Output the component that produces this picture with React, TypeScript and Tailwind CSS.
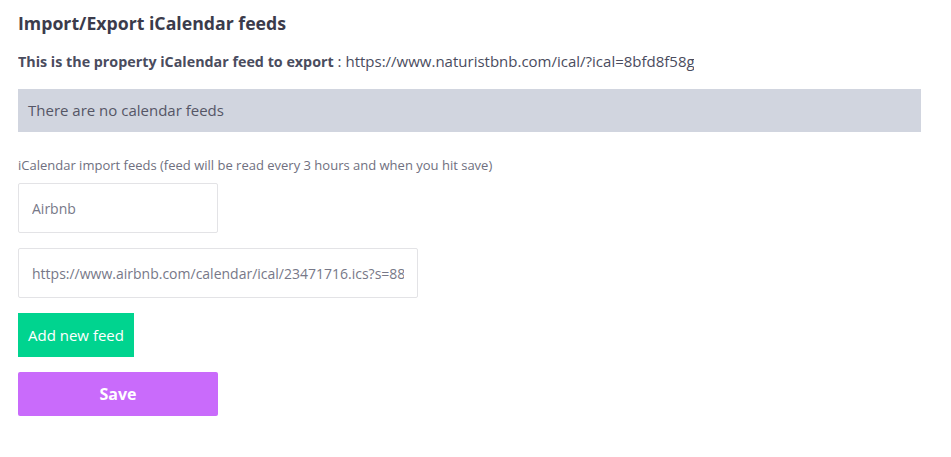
export default function App() {
  return (
    <div className="min-h-screen bg-white px-[18px] pt-[12px] font-['Open_Sans',sans-serif] text-[#44475a]">
      <h2 className="text-[17.7px] font-bold leading-[22px] text-[#3b3b4b]">Import/Export iCalendar feeds</h2>
      <p className="mt-[17px] text-[15px] leading-[20px] whitespace-nowrap overflow-hidden w-[676px]">
        <span className="font-bold text-[14.3px] text-[#4a4c5e]">This is the property iCalendar feed to export</span>
        <span className="text-[#4a4c5e]"> : https://www.naturistbnb.com/ical/?ical=8bfd8f58g</span>
      </p>
      <div className="mt-[17px] h-[43px] w-[903px] bg-[#d1d5df] px-[10px] flex items-center text-[15px] text-[#555666]">
        There are no calendar feeds
      </div>
      <label className="block mt-[25px] text-[13px] leading-[16px] text-[#6f7080]">
        iCalendar import feeds (feed will be read every 3 hours and when you hit save)
      </label>
      <input
        type="text"
        defaultValue="Airbnb"
        className="block mt-[10px] h-[50px] w-[200px] border border-[#e3e3e6] rounded-[2px] px-[13px] text-[14px] text-[#777888] outline-none"
      />
      <input
        type="text"
        defaultValue="https://www.airbnb.com/calendar/ical/23471716.ics?s=88e3f0a1b2c3"
        className="block mt-[15px] h-[50px] w-[400px] border border-[#e3e3e6] rounded-[2px] px-[13px] text-[14px] text-[#777888] outline-none"
      />
      <button className="block mt-[15px] h-[44px] px-[10px] bg-[#00d48f] text-white text-[15px] font-medium">
        Add new feed
      </button>
      <button className="block mt-[15px] h-[44px] w-[200px] rounded-[2px] bg-[#c96bfb] text-white text-[16px] font-bold">
        Save
      </button>
    </div>
  );
}
